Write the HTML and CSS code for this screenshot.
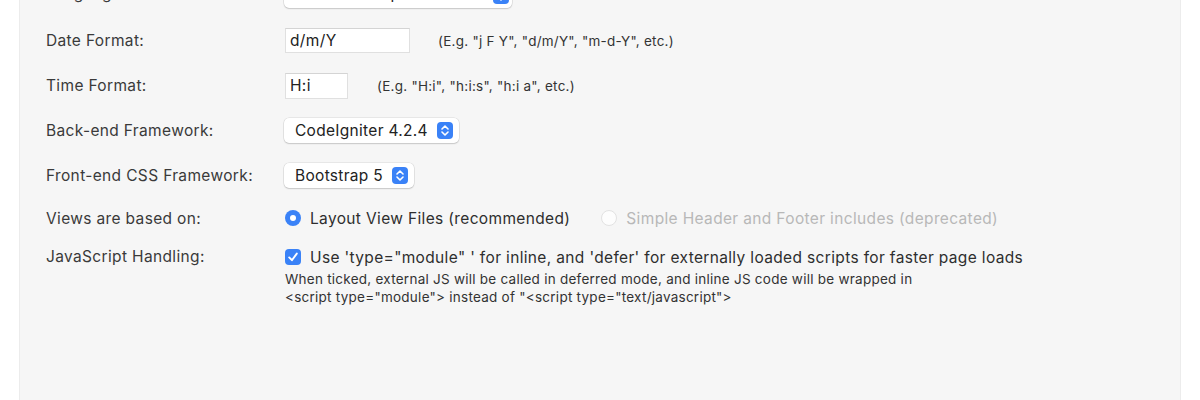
FILE: index.html
```html
<!DOCTYPE html>
<html>
<head>
<meta charset="utf-8">
<link rel="stylesheet" href="styles.css">
</head>
<body>
<div class="panel">
  <div class="form">
    <div class="row row-top">
      <div class="label">Language:</div>
      <div class="field">
        <div class="select select-top"><span class="sel-text">Choose an option</span><span class="stepper"><svg width="8" height="11" viewBox="0 0 8 11"><path d="M1 4 L4 1 L7 4 M1 7 L4 10 L7 7" fill="none" stroke="#fff" stroke-width="1.6" stroke-linecap="round" stroke-linejoin="round"/></svg></span></div>
      </div>
    </div>
    <div class="row">
      <div class="label">Date Format:</div>
      <div class="field">
        <div class="input input-date">d/m/Y</div>
        <span class="hint hint-date">(E.g. "j F Y", "d/m/Y", "m-d-Y", etc.)</span>
      </div>
    </div>
    <div class="row">
      <div class="label">Time Format:</div>
      <div class="field">
        <div class="input input-time">H:i</div>
        <span class="hint hint-time">(E.g. "H:i", "h:i:s", "h:i a", etc.)</span>
      </div>
    </div>
    <div class="row">
      <div class="label">Back-end Framework:</div>
      <div class="field">
        <div class="select"><span class="sel-text">CodeIgniter 4.2.4</span><span class="stepper"><svg width="8" height="11" viewBox="0 0 8 11"><path d="M1 4 L4 1 L7 4 M1 7 L4 10 L7 7" fill="none" stroke="#fff" stroke-width="1.6" stroke-linecap="round" stroke-linejoin="round"/></svg></span></div>
      </div>
    </div>
    <div class="row">
      <div class="label">Front-end CSS Framework:</div>
      <div class="field">
        <div class="select"><span class="sel-text">Bootstrap 5</span><span class="stepper"><svg width="8" height="11" viewBox="0 0 8 11"><path d="M1 4 L4 1 L7 4 M1 7 L4 10 L7 7" fill="none" stroke="#fff" stroke-width="1.6" stroke-linecap="round" stroke-linejoin="round"/></svg></span></div>
      </div>
    </div>
    <div class="row row-views">
      <div class="label">Views are based on:</div>
      <div class="field">
        <span class="radio radio-on"></span><span class="opt">Layout View Files (recommended)</span>
        <span class="radio radio-off"></span><span class="opt opt-disabled">Simple Header and Footer includes (deprecated)</span>
      </div>
    </div>
    <div class="row row-js">
      <div class="label">JavaScript Handling:</div>
      <div class="field-col">
        <div class="check-line">
          <span class="checkbox"><svg width="12" height="12" viewBox="0 0 12 12"><path d="M2.2 6.4 L4.9 9.2 L9.8 2.6" fill="none" stroke="#fff" stroke-width="1.9" stroke-linecap="round" stroke-linejoin="round"/></svg></span><span class="opt">Use 'type="module" ' for inline, and 'defer' for externally loaded scripts for faster page loads</span>
        </div>
        <div class="desc">When ticked, external JS will be called in deferred mode, and inline JS code will be wrapped in<br>&lt;script type="module"&gt; instead of "&lt;script type="text/javascript"&gt;</div>
      </div>
    </div>
  </div>
</div>
</body>
</html>
```
FILE: styles.css
```css
html, body {
  margin: 0;
  padding: 0;
  background: #ffffff;
  overflow: hidden;
}
body {
  font-family: Inter, "Liberation Sans", sans-serif;
  color: #333333;
  height: 400px;
}
.panel {
  margin-left: 20px;
  width: 1160px;
  height: 400px;
  background: #f6f6f6;
  box-shadow: -1px 0 0 #ececec, 1px 0 0 #ececec;
  padding-left: 26px;
  box-sizing: border-box;
  overflow: hidden;
}
.form {
  margin-top: -27px;
  display: flex;
  flex-direction: column;
}
.row {
  display: grid;
  grid-template-columns: 239px auto;
  align-items: center;
  height: 45px;
}
.row-top .label {
  margin-top: -5px;
}
.row-views {
  height: 40px;
}
.row-js {
  align-items: start;
  height: auto;
  padding-top: 9px;
}
.label {
  font-size: 15.5px;
  letter-spacing: 0.35px;
  color: #3a3a3a;
}
.row-js .label {
  line-height: 20px;
}
.field {
  display: flex;
  align-items: center;
}
.input {
  background: #ffffff;
  height: 25px;
  box-sizing: border-box;
  border: 1px solid #e0e0e0;
  border-top-color: #d4d4d4;
  font-size: 15.5px;
  letter-spacing: 0.35px;
  color: #222;
  line-height: 23px;
  padding-left: 4px;
}
.input-date {
  width: 125px;
}
.input-time {
  width: 63px;
  height: 26px;
}
.hint {
  font-size: 13.5px;
  letter-spacing: 0.25px;
  color: #333;
}
.hint-date {
  margin-left: 28px;
}
.hint-time {
  margin-left: 29px;
}
.select {
  display: flex;
  align-items: center;
  background: #ffffff;
  height: 25px;
  border-radius: 5px;
  box-shadow: 0 0 0 0.5px rgba(0,0,0,0.12), 0 1px 1.5px rgba(0,0,0,0.14);
  padding-left: 11px;
  padding-right: 6px;
  box-sizing: border-box;
  margin-left: -1px;
}
.select-top {
  width: 228px;
  justify-content: space-between;
  padding-right: 3px;
}
.select-top .sel-text {
  margin-top: -4px;
}
.sel-text {
  font-size: 15.5px;
  letter-spacing: 0.3px;
  color: #222;
}
.stepper {
  width: 16px;
  height: 17px;
  border-radius: 4px;
  background: #3a82f7;
  display: flex;
  align-items: center;
  justify-content: center;
  margin-left: 9px;
}
.radio {
  width: 16px;
  height: 16px;
  border-radius: 50%;
  box-sizing: border-box;
  flex: none;
}
.radio-on {
  background: #3a82f7;
  position: relative;
}
.radio-on::after {
  content: "";
  position: absolute;
  left: 5px;
  top: 5px;
  width: 6px;
  height: 6px;
  border-radius: 50%;
  background: #fff;
}
.radio-off {
  background: #fdfdfd;
  border: 1px solid #e2e2e2;
  margin-left: 31px;
}
.opt {
  font-size: 15.5px;
  letter-spacing: 0.35px;
  color: #2e2e2e;
  margin-left: 9px;
}
.opt-disabled {
  color: #b8b8b8;
}
.field-col {
  display: flex;
  flex-direction: column;
}
.check-line {
  display: flex;
  align-items: center;
  height: 20px;
}
.checkbox {
  width: 16px;
  height: 16px;
  border-radius: 4px;
  background: #3a82f7;
  display: flex;
  align-items: center;
  justify-content: center;
  flex: none;
}
.desc {
  font-size: 13.5px;
  letter-spacing: 0.25px;
  color: #333;
  line-height: 17.5px;
  margin-top: 4px;
}
```
